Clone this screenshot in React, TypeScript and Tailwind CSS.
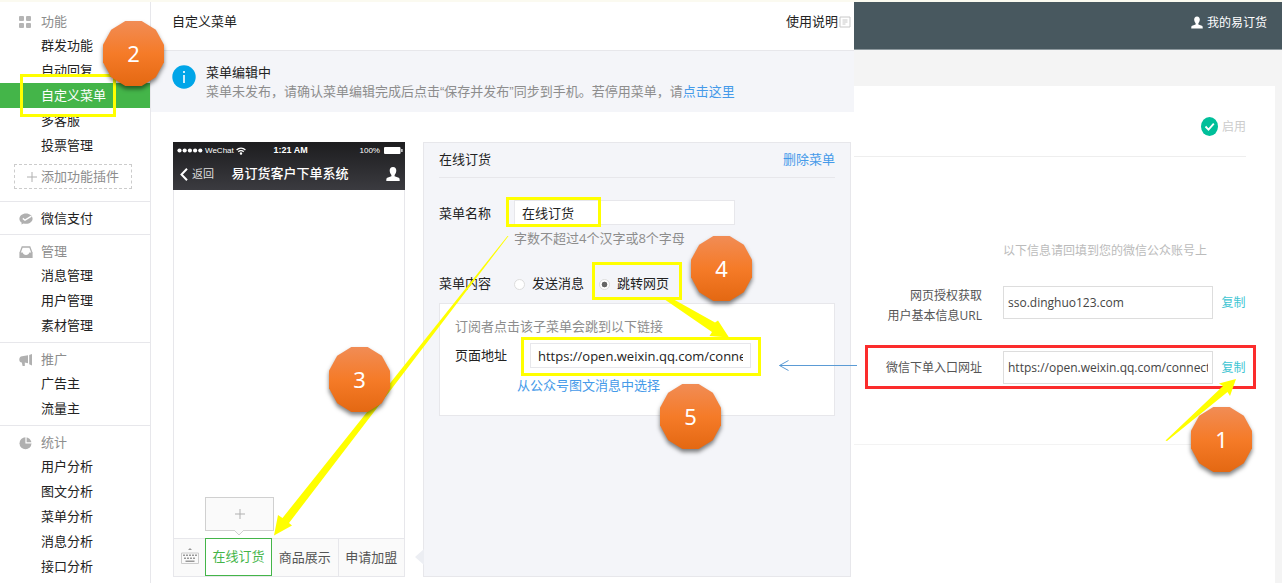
import React from "react";

const FONT = "font-['Open_Sans','Noto_Sans_CJK_SC',sans-serif]";

function GridIcon() {
  return (
    <svg viewBox="0 0 12 12" className="size-3 fill-[#b5b5b5]" aria-hidden="true">
      <rect x="0" y="0" width="5" height="5" rx="1" />
      <rect x="7" y="0" width="5" height="5" rx="1" />
      <rect x="0" y="7" width="5" height="5" rx="1" />
      <rect x="7" y="7" width="5" height="5" rx="1" />
    </svg>
  );
}

function PayIcon() {
  return (
    <svg viewBox="0 0 14 12" className="h-3 w-3.5" aria-hidden="true">
      <path d="M7 0.5C3.2 0.5.4 2.8.4 5.7c0 1.700.9 3.100 2.300 4L2.400 11.600 4.600 10.500c.8.2 1.600.3 2.400.3 3.800 0 6.600-2.300 6.600-5.100S10.800.5 7 .5Z" fill="#b0b0b0" />
      <path d="M3.800 5.400 6 7.200 12.400 3.200" stroke="#fff" strokeWidth="1.400" fill="none" />
    </svg>
  );
}

function InboxIcon() {
  return (
    <svg viewBox="0 0 14 12" className="h-3 w-3.5" aria-hidden="true">
      <path d="M1 7 3.200 1h7.600L13 7" stroke="#b0b0b0" strokeWidth="1.300" fill="none" />
      <path d="M.4 6.500h3.300c.3 1.600 1.600 2.500 3.300 2.500s3-.9 3.300-2.500h3.300v5.500H.4Z" fill="#b0b0b0" />
    </svg>
  );
}

function HornIcon() {
  return (
    <svg viewBox="0 0 14 13" className="h-3.5 w-3.5 fill-[#b0b0b0]" aria-hidden="true">
      <path d="M9 1.800v8L5.800 9v3.500H3.600L2.800 9C1.200 9 .3 7.800.3 6s1-3 2.800-3.200Z" />
      <path d="M10.200 1.500 13 .5v11.500l-2.800-1.200Z" />
    </svg>
  );
}

function PieIcon() {
  return (
    <svg viewBox="0 0 14 14" className="size-3.5" aria-hidden="true">
      <circle cx="6.500" cy="7.200" r="6" fill="#b0b0b0" />
      <path d="M7 0v6.800h6.500" stroke="#fff" strokeWidth="1.200" fill="none" />
    </svg>
  );
}

function Person({ className }: { className: string }) {
  return (
    <svg viewBox="0 0 14 14" className={className} fill="#fff" aria-hidden="true">
      <path d="M7 0C4.700 0 3.700 1.600 3.700 3.600c0 1.800.8 3.300 1.700 4.300v1.300L1.300 10.800C.5 11.200.3 11.900.3 14h13.400c0-2.100-.2-2.800-1-3.200L8.600 9.200V7.900c.9-1 1.700-2.500 1.700-4.300C10.300 1.600 9.300 0 7 0Z" />
    </svg>
  );
}

type GroupProps = {
  icon: React.ReactNode;
  title: string;
  items: string[];
};

function GroupTitle({ icon, title, strong }: { icon: React.ReactNode; title: string; strong?: boolean }) {
  return (
    <div className="flex h-[22px] items-center pl-[19px]">
      <span className="flex w-[22px]">{icon}</span>
      {strong ? <a href="#pay" className="text-[#222]">{title}</a> : <h2 className="text-[#8d8d8d]">{title}</h2>}
    </div>
  );
}

function Items({ items }: { items: string[] }) {
  return (
    <ul>
      {items.map((t) => (
        <li key={t}>
          {t === "自定义菜单" ? (
            <a href="#menu" aria-current="page" className="relative flex h-[25px] items-center bg-[#44b549] pl-[41px] text-white">
              {t}
              <span className="absolute -top-[9px] left-5 z-10 h-[43px] w-24 border-3 border-[#ff0]" />
            </a>
          ) : (
            <a href="#item" className="flex h-[25px] items-center pl-[41px]">{t}</a>
          )}
        </li>
      ))}
    </ul>
  );
}

function Group({ icon, title, items }: GroupProps) {
  return (
    <section className="border-t border-[#e7e7eb] pt-1.5 pb-1">
      <GroupTitle icon={icon} title={title} />
      <Items items={items} />
    </section>
  );
}

function Sidebar() {
  return (
    <nav className="w-[151px] shrink-0 border-r border-[#e7e7eb]">
      <section className="pt-[9px] pb-3">
        <GroupTitle icon={<GridIcon />} title="功能" />
        <Items items={["群发功能", "自动回复", "自定义菜单", "多客服", "投票管理"]} />
        <button type="button" className="mt-1.5 ml-3.5 flex h-[25px] w-[118px] items-center justify-center gap-1 border border-dashed border-[#ccc] text-[#8d8d8d]">
          <svg viewBox="0 0 10 10" className="size-2.5" stroke="#b0b0b0" aria-hidden="true">
            <path d="M5 0v10M0 5h10" />
          </svg>
          添加功能插件
        </button>
      </section>
      <section className="border-t border-[#e7e7eb] pt-1.5 pb-1">
        <GroupTitle icon={<PayIcon />} title="微信支付" strong />
      </section>
      <Group icon={<InboxIcon />} title="管理" items={["消息管理", "用户管理", "素材管理"]} />
      <Group icon={<HornIcon />} title="推广" items={["广告主", "流量主"]} />
      <Group icon={<PieIcon />} title="统计" items={["用户分析", "图文分析", "菜单分析", "消息分析", "接口分析"]} />
    </nav>
  );
}

function Phone() {
  return (
    <section className="flex w-[232px] shrink-0 flex-col border border-[#e7e7eb]">
      <header className="-mx-px -mt-px h-12 bg-linear-to-b from-[#1d1d1f] to-[#3b3b40] text-white">
        <div className="flex h-[17px] items-center justify-between pr-0.5 pl-1 font-['Liberation_Sans',sans-serif] text-[8px]">
          <span className="flex items-center gap-0.5">
            <svg viewBox="0 0 26 5" className="h-[5px] w-[26px]" fill="#fff" aria-hidden="true">
              <circle cx="2.500" cy="2.500" r="2.100" />
              <circle cx="7.700" cy="2.500" r="2.100" />
              <circle cx="12.900" cy="2.500" r="2.100" />
              <circle cx="18.100" cy="2.500" r="2.100" />
              <circle cx="23.300" cy="2.500" r="2.100" />
            </svg>
            WeChat
            <svg viewBox="0 0 10 8" className="h-2 w-2.5" fill="none" stroke="#fff" strokeWidth="1.300" aria-hidden="true">
              <path d="M.6 3C3 .6 7 .6 9.400 3M2.300 4.800c1.500-1.500 3.900-1.500 5.400 0" />
              <circle cx="5" cy="6.500" r=".6" fill="#fff" />
            </svg>
          </span>
          <span className="pr-6 text-[9px] font-bold">1:21 AM</span>
          <span className="flex items-center gap-1">
            100%
            <svg viewBox="0 0 19 7" className="h-[7px] w-[19px]" fill="#fff" aria-hidden="true">
              <rect width="16.500" height="7" rx="1" />
              <rect x="17.300" y="2" width="1.200" height="3" />
            </svg>
          </span>
        </div>
        <div className="flex h-[30px] items-center justify-between pr-[5px] pl-[7px]">
          <span className="flex items-center gap-1 text-[11px] text-[#ddd]">
            <svg viewBox="0 0 8 13" className="h-[13px] w-2" fill="none" stroke="#fff" strokeWidth="2" aria-hidden="true">
              <path d="M7 .8 1.500 6.500 7 12.200" />
            </svg>
            返回
          </span>
          <strong className="pr-5 font-medium">易订货客户下单系统</strong>
          <Person className="h-3.5 w-3.5" />
        </div>
      </header>
      <div className="flex-1" />
      <footer className="flex h-[38px] border-t border-[#e7e7eb] bg-[#fafafa] text-[#555]">
        <span className="flex w-[31px] items-center justify-center pb-1">
          <svg viewBox="0 0 18 16" className="h-4 w-[18px]" fill="#999" aria-hidden="true">
            <path d="M9 0 11 2H7Z" />
            <path d="M.5 5h17v10.500H.5Z" fill="none" stroke="#ccc" />
            <path d="M2 6.500h2v1.500H2zM5 6.500h2v1.500H5zM8 6.500h2v1.500H8zM11 6.500h2v1.500h-2zM14 6.500h2v1.500h-2zM3 9.500h2V11H3zM6 9.500h2V11H6zM9 9.500h2V11H9zM12 9.500h2V11h-2zM4.500 12.500h9V14h-9z" />
          </svg>
        </span>
        <div className="relative -mt-px w-[67px]">
          <button type="button" aria-label="添加子菜单" className="absolute bottom-[45px] left-0 flex h-[34px] w-[69px] items-center justify-center border border-[#d0d0d0] bg-[#fafafa]">
            <svg viewBox="0 0 10 10" className="size-2.5" stroke="#b0b0b0" aria-hidden="true">
              <path d="M5 0v10M0 5h10" />
            </svg>
            <svg viewBox="0 0 10 6" className="absolute -bottom-[6px] left-7 h-1.5 w-2.5" aria-hidden="true">
              <path d="M0 0 5 5 10 0" fill="#fafafa" stroke="#d0d0d0" />
            </svg>
          </button>
          <button type="button" className="h-[38px] w-full border border-[#44b549] bg-white text-[#44b549]">在线订货</button>
        </div>
        <button type="button" className="flex-1">商品展示</button>
        <button type="button" className="flex-1 border-l border-[#e7e7eb]">申请加盟</button>
      </footer>
    </section>
  );
}

function Editor() {
  return (
    <section className="relative min-w-0 flex-1 border border-[#e7e7eb] bg-[#f4f5f9] px-[15px]">
      <svg viewBox="0 0 9 16" className="absolute bottom-[11px] -left-[9px] h-4 w-[9px]" aria-hidden="true">
        <path d="M9 0 0 8 9 16Z" fill="#eceef3" />
      </svg>
      <header className="flex h-[35px] items-center justify-between border-b border-[#e7e7eb]">
        <h2>在线订货</h2>
        <a href="#delete" className="text-[#459ae9]">删除菜单</a>
      </header>
      <div className="mt-[22px] flex">
        <label htmlFor="name" className="w-[75px] pt-1">菜单名称</label>
        <div className="relative">
          <input id="name" defaultValue="在线订货" className="block h-[25px] w-[221px] border border-[#e7e7eb] bg-white px-[7px]" />
          <span className="pointer-events-none absolute -top-[3px] -left-2 h-[30px] w-[95px] border-3 border-[#ff0]" />
          <p className="mt-1 leading-[18px] text-[#8d8d8d]">字数不超过4个汉字或8个字母</p>
        </div>
      </div>
      <fieldset className="mt-[25px] flex h-6 items-center">
        <legend className="float-left w-[75px]">菜单内容</legend>
        <label className="flex w-[85px] items-center gap-[7px]">
          <input type="radio" name="kind" className="size-[11px] appearance-none rounded-full border border-[#ddd] bg-white" />
          发送消息
        </label>
        <label className="relative flex items-center gap-[7px]">
          <input type="radio" name="kind" defaultChecked className="size-[11px] appearance-none rounded-full border border-[#ddd] bg-white bg-radial from-[#666] from-40% to-white to-50%" />
          跳转网页
          <span className="pointer-events-none absolute -top-3 -left-[7px] h-[38px] w-[90px] border-3 border-[#ff0]" />
        </label>
      </fieldset>
      <div className="mt-[7px] h-[113px] border border-[#e7e7eb] bg-white px-[15px] pt-3">
        <p className="leading-5 text-[#8d8d8d]">订阅者点击该子菜单会跳到以下链接</p>
        <div className="relative mt-[7px] flex items-center">
          <label htmlFor="url" className="w-[75px]">页面地址</label>
          <input id="url" defaultValue="https://open.weixin.qq.com/connect" className="h-[25px] w-[221px] border border-[#e7e7eb] px-[7px]" />
          <span className="pointer-events-none absolute -top-1.5 left-[66px] h-[39px] w-60 border-3 border-[#ff0]" />
        </div>
        <a href="#pick" className="mt-[7px] ml-[62px] inline-block leading-5 text-[#459ae9]">从公众号图文消息中选择</a>
      </div>
    </section>
  );
}

function Main() {
  return (
    <main className="flex w-[703px] shrink-0 flex-col">
      <header className="flex h-[49px] items-center justify-between border-b border-[#e7e7eb] pr-[3px] pb-2 pl-[21px]">
        <h1>自定义菜单</h1>
        <a href="#help" className="flex items-center">
          使用说明
          <svg viewBox="0 0 12 12" className="ml-px size-3" fill="none" stroke="#c8c8c8" aria-hidden="true">
            <path d="M1 1h10v10H1ZM3.500 4h5M3.500 6h5M3.500 8h3" />
          </svg>
        </a>
      </header>
      <div className="flex h-[61px] gap-2.5 bg-[#f4f5f9] pt-[11px] pl-[21px]">
        <svg viewBox="0 0 24 24" className="mt-[3px] size-6" aria-hidden="true">
          <circle cx="12" cy="12" r="11.700" fill="#00a5e8" />
          <path d="M11.200 6h1.600v2h-1.600zM11.200 10h1.600v8h-1.600z" fill="#fff" />
        </svg>
        <div className="leading-5">
          <p>菜单编辑中</p>
          <p className="font-['Liberation_Sans','Noto_Sans_CJK_SC',sans-serif] text-[#8d8d8d]">
            菜单未发布，请确认菜单编辑完成后点击“保存并发布”同步到手机。若停用菜单，请<a href="#stop" className="text-[#459ae9]">点击这里</a>
          </p>
        </div>
      </div>
      <div className="mt-[30px] mb-1.5 flex flex-1 gap-[18px] pr-[3px] pl-[22px]">
        <Phone />
        <Editor />
      </div>
    </main>
  );
}

function Account() {
  const input = "h-[33px] w-[210px] border border-[#ddd] px-1 text-[12px] text-[#444]";
  return (
    <section className="flex min-w-0 flex-1 flex-col bg-[#f4f4f4] text-[12px] text-[#555]">
      <header className="flex h-12 items-center justify-end gap-1 border-b border-[#8d989d] bg-[#48585f] pr-[15px] pb-1.5 text-white">
        <Person className="h-[15px] w-3" />
        我的易订货
      </header>
      <div className="relative mt-9 mr-[7px] flex-1 bg-white pr-[29px]">
        <div className="flex h-[71px] items-center justify-end gap-1 border-b border-[#eee] pt-[11px] text-[#ccc]">
          <svg viewBox="0 0 17 19" className="h-[19px] w-[17px]" aria-hidden="true">
            <ellipse cx="8.500" cy="9.500" rx="8.500" ry="9.500" fill="#00bf9a" />
            <path d="M4.500 9.500 7.500 12.600 12.800 6.600" stroke="#fff" strokeWidth="1.800" fill="none" />
          </svg>
          启用
        </div>
        <div className="grid grid-cols-[1fr_210px_33px] items-start gap-y-[25px] border-b border-[#f3f3f3] pt-[84px] pb-[60px]">
          <p className="col-span-2 col-start-2 leading-5 text-[#bbb]">以下信息请回填到您的微信公众账号上</p>
          <label htmlFor="sso" className="pr-[21px] text-right leading-5">
            网页授权获取
            <br />
            用户基本信息URL
          </label>
          <input id="sso" defaultValue="sso.dinghuo123.com" className={input} />
          <button type="button" className="ml-2 h-[33px] whitespace-nowrap text-[#3ec5d3]">复制</button>
          <label htmlFor="entry" className="pr-[21px] text-right leading-[33px]">微信下单入口网址</label>
          <input id="entry" defaultValue="https://open.weixin.qq.com/connect" className={input} />
          <button type="button" className="ml-2 h-[33px] whitespace-nowrap text-[#3ec5d3]">复制</button>
        </div>
        <span className="pointer-events-none absolute top-[259px] right-[19px] h-11 w-[391px] border-3 border-[#fb2c2c]" />
        <svg viewBox="0 0 72 64" className="pointer-events-none absolute top-[292px] right-[38px] h-16 w-[72px]" aria-hidden="true">
          <path d="M.5 62.500 58 8 54 5.500 71 1 65 18 62.500 14 2 63Z" fill="#ff0" />
        </svg>
        <div className="absolute top-[321px] right-[23px]">
          <Badge n={1} />
        </div>
      </div>
    </section>
  );
}

function Badge({ n }: { n: number }) {
  return (
    <div className="relative flex h-[65px] w-[61px] items-center justify-center font-['Noto_Sans',sans-serif] text-[22px] text-white">
      <svg viewBox="0 0 62 66" preserveAspectRatio="none" className="absolute inset-0 h-full w-full overflow-visible drop-shadow-[0_3px_2px_rgba(0,0,0,0.5)]" aria-hidden="true">
        <defs>
          <linearGradient id={`badge${n}`} x1="0" y1="0" x2="0" y2="1">
            <stop offset="0" stopColor="#f18c55" />
            <stop offset=".5" stopColor="#f57b28" />
            <stop offset="1" stopColor="#e46812" />
          </linearGradient>
        </defs>
        <path d="M22.700 0H39.300L53.700 8.800 62 24.200V41.800L53.700 57.200 39.300 66H22.700L8.300 57.200 0 41.800V24.200L8.300 8.800Z" fill={`url(#badge${n})`} />
      </svg>
      <span className="relative">{n}</span>
    </div>
  );
}

function Notes() {
  return (
    <div className="pointer-events-none absolute inset-0 z-20">
      <svg viewBox="0 0 880 583" className="absolute top-0 left-0 h-[583px] w-[880px]" aria-hidden="true">
        <path d="M274 535.500 278 515 282.500 518 507.500 236 508.500 236 289 523 292 525.500Z" fill="#ff0" />
        <path d="M664 299H673L715 322.500 718 320.500 729 337.500 709.500 336 712 332Z" fill="#ff0" />
        <path d="M857 365.500H779.500M788.500 360.500 779.500 365.500 788.500 370.500" fill="none" stroke="#5b9bd5" />
      </svg>
      <div className="absolute top-[21px] left-[103px]"><Badge n={2} /></div>
      <div className="absolute top-[347px] left-[329px]"><Badge n={3} /></div>
      <div className="absolute top-[236px] left-[691px]"><Badge n={4} /></div>
      <div className="absolute top-[384px] left-[660px]"><Badge n={5} /></div>
    </div>
  );
}

export default function App() {
  return (
    <div className={`relative flex min-h-screen flex-col bg-white text-[13px] text-[#222] ${FONT}`}>
      <div className="h-0.5 bg-[#fbfaf0]" />
      <div className="flex flex-1">
        <Sidebar />
        <Main />
        <Account />
      </div>
      <Notes />
    </div>
  );
}
